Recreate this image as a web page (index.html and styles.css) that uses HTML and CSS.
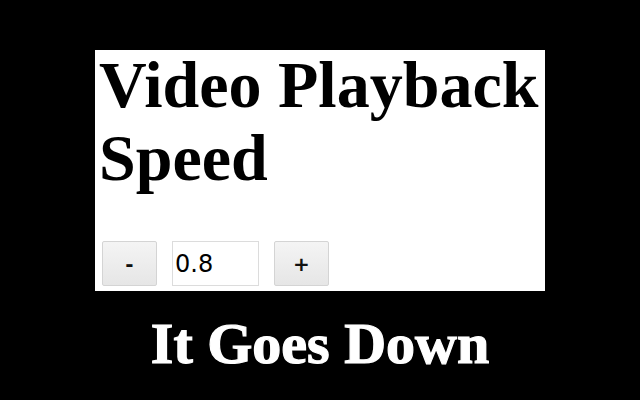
FILE: index.html
```html
<!DOCTYPE html>
<html>
<head>
<meta charset="utf-8">
<link rel="stylesheet" href="styles.css">
</head>
<body>
<div class="stage">
  <div class="card">
    <h1 class="title">Video Playback Speed</h1>
    <div class="controls">
      <button class="btn">-</button>
      <input class="speed" type="text" value="0.8">
      <button class="btn">+</button>
    </div>
  </div>
  <div class="caption">It Goes Down</div>
</div>
</body>
</html>
```
FILE: styles.css
```css
html, body {
  margin: 0;
  padding: 0;
  background: #000;
  width: 640px;
  height: 400px;
  overflow: hidden;
}
.stage {
  display: flex;
  flex-direction: column;
  align-items: center;
  padding-top: 50px;
}
.card {
  background: #fff;
  width: 450px;
  height: 241px;
  box-sizing: border-box;
  padding: 0 0 0 5px;
}
.title {
  font-family: "Liberation Serif", serif;
  font-weight: bold;
  font-size: 66px;
  line-height: 73px;
  margin: -2px 0 0 -1px;
  color: #000;
}
.controls {
  display: flex;
  gap: 15px;
  margin-top: 47px;
  margin-left: 2px;
}
.btn {
  width: 55px;
  height: 45px;
  box-sizing: border-box;
  border: 1px solid #d4d4d4;
  border-radius: 2px;
  background: linear-gradient(#f4f4f4, #e6e6e6);
  font-family: "DejaVu Sans", sans-serif;
  font-weight: bold;
  font-size: 20px;
  color: #111;
  padding: 0;
}
.speed {
  width: 87px;
  height: 45px;
  box-sizing: border-box;
  border: 1px solid #dcdcdc;
  font-family: "DejaVu Sans", sans-serif;
  font-size: 24px;
  padding: 0 0 0 2px;
  color: #000;
  outline: none;
}
.caption {
  font-family: "Liberation Serif", serif;
  font-weight: bold;
  font-size: 58px;
  color: #fff;
  -webkit-text-stroke: 1.2px #fff;
  margin-top: 20px;
  line-height: 66px;
}
```
